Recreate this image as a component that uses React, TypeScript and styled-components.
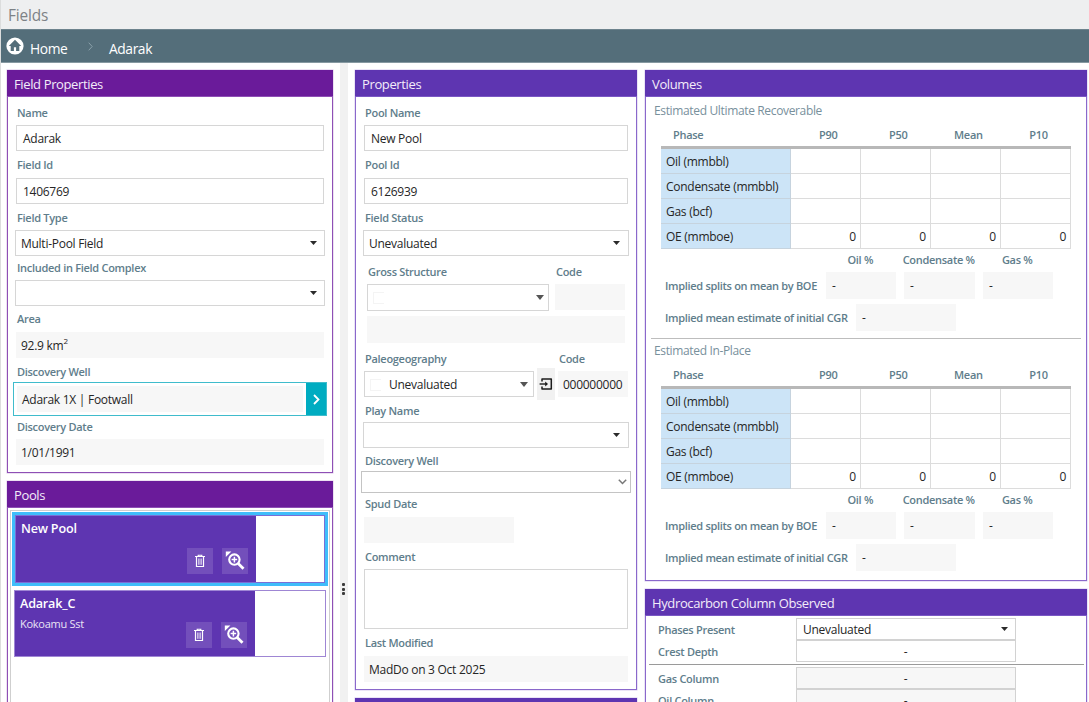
import React from "react";
import styled, { createGlobalStyle, css } from "styled-components";

const GlobalStyle = createGlobalStyle`
  * { box-sizing: border-box; }
  html, body { margin: 0; padding: 0; background: #fff; }
  body {
    font-family: "Open Sans", "Noto Sans", sans-serif;
    font-size: 12px;
    letter-spacing: -0.27px;
    color: #262626;
    overflow: hidden;
  }
`;

const Page = styled.div`
  width: 1089px;
  height: 702px;
  overflow: hidden;
  display: flex;
  flex-direction: column;
  background: #fff;
  border-left: 1px solid #dcdddd;
`;

const TitleBar = styled.header`
  flex: none;
  height: 29px;
  padding-left: 7px;
  background: #eeeff0;
  color: #7d8286;
  font-size: 15.4px;
  letter-spacing: -0.15px;
  line-height: 31px;
`;

const Breadcrumb = styled.nav`
  flex: none;
  height: 34px;
  margin-left: -1px;
  padding-left: 6px;
  display: flex;
  align-items: center;
  background: #546e7a;
  border-top: 1px solid #6d838d;
  border-bottom: 1px solid #8699a1;
  color: #fff;
  font-size: 13.8px;
  letter-spacing: -0.4px;
  svg { display: block; }
`;

const HomeBadge = styled.span`
  width: 18px;
  height: 18px;
`;

const Crumb = styled.span<{ $left: number; $w?: number }>`
  margin-left: ${(p) => p.$left}px;
  width: ${(p) => (p.$w ? p.$w + "px" : "auto")};
  padding-top: 5px;
  line-height: 18px;
  white-space: nowrap;
`;

const Workspace = styled.main`
  flex: 1;
  min-height: 0;
  display: flex;
  align-items: stretch;
`;

const Column = styled.section<{ $w: number; $left: number; $gap: number }>`
  flex: none;
  width: ${(p) => p.$w}px;
  margin-left: ${(p) => p.$left}px;
  padding-top: 7px;
  display: flex;
  flex-direction: column;
  gap: ${(p) => p.$gap}px;
`;

const Splitter = styled.div`
  flex: none;
  width: 8px;
  margin-left: 7px;
  background: #f1f1f1;
  display: flex;
  flex-direction: column;
  align-items: flex-start;
  padding: 520px 0 0 2px;
  gap: 1.5px;
`;

const Dot = styled.i`
  width: 3px;
  height: 3px;
  border-radius: 1px;
  background: #3b3b3b;
`;

const PanelFrame = styled.article<{ $tone: "violet" | "indigo"; $h: number }>`
  flex: none;
  height: ${(p) => p.$h}px;
  border: 1px solid ${(p) => (p.$tone === "violet" ? "#8e4fb5" : "#8a68cb")};
  box-shadow: 0 0 0 0.5px ${(p) => (p.$tone === "violet" ? "#d9c3e6" : "#d6caee")};
  display: flex;
  flex-direction: column;
  background: #fff;
`;

const PanelHead = styled.h2<{ $tone: "violet" | "indigo" }>`
  flex: none;
  margin: -1px -1px 0;
  height: 27px;
  padding-left: 7px;
  background: ${(p) => (p.$tone === "violet" ? "#6a1b9a" : "#5e35b1")};
  border-bottom: 1px solid ${(p) => (p.$tone === "violet" ? "#8e4fb5" : "#7a58c4")};
  color: #f3ecf9;
  font-weight: 400;
  font-size: 13px;
  letter-spacing: -0.37px;
  line-height: 28px;
`;

const Label = styled.label<{ $h: number; $pb?: number; $pl?: number; $w?: number }>`
  flex: none;
  display: flex;
  align-items: flex-end;
  height: ${(p) => p.$h}px;
  width: ${(p) => (p.$w ? p.$w + "px" : "auto")};
  padding-left: ${(p) => p.$pl ?? 9}px;
  padding-bottom: ${(p) => p.$pb ?? 4}px;
  line-height: 16px;
  font-size: 11px;
  letter-spacing: -0.29px;
  font-weight: 600;
  color: #607d8b;
  white-space: nowrap;
`;

const Box = styled.div<{
  $kind?: "input" | "read";
  $h?: number;
  $w?: number;
  $ml?: number;
  $mr?: number;
  $pl?: number;
  $pr?: number;
  $edge?: string;
}>`
  flex: none;
  display: flex;
  align-items: center;
  height: ${(p) => p.$h ?? 26}px;
  ${(p) => p.$w && css`width: ${p.$w}px;`}
  margin-left: ${(p) => p.$ml ?? 8}px;
  margin-right: ${(p) => p.$mr ?? 8}px;
  padding: 1px ${(p) => p.$pr ?? 7}px 0 ${(p) => p.$pl ?? 6}px;
  line-height: 16px;
  white-space: nowrap;
  ${(p) =>
    p.$kind === "read"
      ? css`background: #f7f7f7;`
      : css`background: #fff; border: 1px solid ${p.$edge ?? "#d6d6d6"};`}
  svg { margin: 0 0 1px auto; flex: none; display: block; }
  sup { font-size: 8px; line-height: 8px; align-self: flex-start; margin-top: 4px; }
`;

const StripBox = styled(Box)`
  margin-top: 5px;
`;

const BoxText = styled.span`
  margin-left: 8px;
`;

const Row = styled.div`
  flex: none;
  display: flex;
  align-items: flex-start;
`;

const WellPicker = styled.div`
  flex: none;
  display: flex;
  height: 34px;
  margin: 0 5px;
  border: 1px solid #3fbccc;
`;

const WellName = styled.div`
  flex: 1;
  margin: 3px;
  padding-left: 5px;
  background: #f7f7f7;
  line-height: 27px;
`;

const WellGo = styled.button`
  width: 20px;
  padding: 0;
  border: 0;
  background: #00acc1;
  display: grid;
  place-items: center;
`;

const Ghost = styled.span`
  width: 11px;
  height: 12px;
  border: 1px solid #f4f4f4;
  border-right: 0;
`;

const JumpButton = styled.button`
  width: 18px;
  height: 32px;
  margin: -3px 3px 0;
  padding: 0;
  border: 0;
  background: #f1f1f1;
  display: grid;
  place-items: center;
`;

const PoolList = styled.div`
  flex: 1;
  margin: 2px 2px 0;
  padding: 1px 1px 0;
  border: 1px solid #cfcfcf;
  display: flex;
  flex-direction: column;
  gap: 4px;
`;

const PoolItem = styled.div<{ $selected?: boolean }>`
  display: flex;
  background: #fff;
  ${(p) =>
    p.$selected
      ? css`
          height: 74px;
          border: 3px solid #3fbdfa;
          box-shadow: inset 0 0 0 1px #7a6fd6;
        `
      : css`
          height: 67px;
          margin: 0 2px;
          border: 1px solid #9f86d4;
        `}
`;

const PoolBody = styled.div<{ $selected?: boolean }>`
  width: 240px;
  margin: ${(p) => (p.$selected ? "1px 0 1px 1px" : "0")};
  background: #5e35b1;
  color: #fff;
  padding: 4px 8px 8px 5px;
  display: grid;
  grid-template-columns: 1fr auto;
  grid-template-rows: 18px 1fr;
`;

const PoolName = styled.strong`
  grid-column: 1 / 3;
  font-size: 12.6px;
  letter-spacing: -0.2px;
  font-weight: 600;
  line-height: 18px;
`;

const PoolNote = styled.span`
  font-size: 11px;
  line-height: 20px;
  padding-top: 1px;
  color: #eae4f5;
`;

const PoolActions = styled.span`
  display: flex;
  align-items: flex-end;
  gap: 9px;
`;

const PoolButton = styled.button`
  width: 26px;
  height: 26px;
  padding: 0;
  border: 0;
  background: #734fbb;
  display: grid;
  place-items: center;
  svg { display: block; }
`;

const Estimate = styled.section<{ $h: number; $top: number; $rule?: boolean }>`
  flex: none;
  height: ${(p) => p.$h}px;
  margin: 0 5px;
  padding: ${(p) => p.$top}px 0 0 10px;
  ${(p) => p.$rule && css`border-bottom: 1px solid #bdbdbd;`}
`;

const EstimateTitle = styled.h3`
  margin: 0 0 0 -7px;
  height: 26px;
  font-size: 12px;
  letter-spacing: -0.35px;
  font-weight: 400;
  line-height: 16px;
  color: #78909c;
`;

const Grid = styled.table`
  width: 410px;
  border-collapse: collapse;
  table-layout: fixed;
  th {
    height: 18px;
    padding: 0 0 4px 6px;
    border-bottom: 3px solid #b8b8b8;
    font-size: 11px;
    letter-spacing: -0.29px;
    font-weight: 600;
    line-height: 12px;
    color: #607d8b;
    text-align: center;
  }
  th:first-child { text-align: left; padding-left: 12px; }
  td {
    height: 25px;
    padding: 2px 4px 0;
    border: 1px solid #dcdcdc;
    text-align: right;
    line-height: 16px;
  }
  tbody tr:first-child td { height: 26px; }
  td:first-child {
    background: #cce4f7;
    border-left: 0;
    border-color: #c6d3de;
    padding-left: 5px;
    text-align: left;
  }
`;

const SplitHeads = styled.div`
  display: grid;
  grid-template-columns: repeat(3, 78.5px);
  height: 23px;
  margin-left: 160px;
  justify-items: center;
  line-height: 21px;
  font-size: 11px;
  letter-spacing: -0.29px;
  font-weight: 600;
  color: #607d8b;
`;

const SplitRow = styled.div<{ $gap: number }>`
  display: flex;
  height: 27px;
  margin-bottom: 5px;
  padding-left: 4px;
  gap: ${(p) => p.$gap}px;
`;

const SplitLabel = styled.span<{ $w: number }>`
  width: ${(p) => p.$w}px;
  line-height: 28px;
  font-size: 11px;
  letter-spacing: -0.31px;
  font-weight: 600;
  color: #607d8b;
  white-space: nowrap;
`;

const SplitValue = styled.span<{ $w: number }>`
  width: ${(p) => p.$w}px;
  padding-left: 6px;
  background: #f7f7f7;
  line-height: 27px;
`;

const ColumnRow = styled.div<{ $top?: number }>`
  flex: none;
  display: flex;
  align-items: center;
  height: 22px;
  margin-top: ${(p) => p.$top ?? 0}px;
  padding-left: 12px;
`;

const ColumnLabel = styled.span`
  width: 138px;
  padding-top: 1px;
  font-size: 11px;
  line-height: 16px;
  letter-spacing: -0.29px;
  font-weight: 600;
  color: #607d8b;
`;

const ColumnValue = styled.span<{ $read?: boolean; $left?: boolean }>`
  display: flex;
  align-items: center;
  justify-content: ${(p) => (p.$left ? "space-between" : "center")};
  width: 220px;
  height: 22px;
  padding: 0 7px 0 6px;
  border: 1px solid #d2d2d2;
  background: ${(p) => (p.$read ? "#f7f7f7" : "#fff")};
`;

const Rule = styled.hr`
  flex: none;
  width: calc(100% - 5px);
  height: 1px;
  margin: 2px 0 0 3px;
  border: 0;
  background: #9a9a9a;
`;

const Caret = ({ color = "#2b2b2b", w = 7 }: { color?: string; w?: number }) => (
  <svg width={w} height={w === 7 ? 4 : 5} viewBox="0 0 8 5" preserveAspectRatio="none">
    <path d="M0 0h8L4 5z" fill={color} />
  </svg>
);

const HomeIcon = () => (
  <svg width="18" height="18" viewBox="0 0 18 18">
    <circle cx="9" cy="9" r="8.6" fill="#fff" />
    <path d="M9 2.8 2.8 8.900h1.900v5.200h3.200v-3.900h2.200v3.900h3.200V8.900h1.900z" fill="#546e7a" />
  </svg>
);

const TrashIcon = () => (
  <svg width="12" height="14" viewBox="0 0 12 14" fill="none" stroke="#fff">
    <path d="M1 2.500h10M4.200 2V1.300h3.600V2" strokeWidth="1.1" />
    <path d="M2.500 3v9.500h7V3" strokeWidth="1.200" />
    <path d="M4.900 4.500v6.300M7.100 4.500v6.300" strokeWidth="1" />
  </svg>
);

const ZoomIcon = () => (
  <svg width="20" height="20" viewBox="0 0 20 20" fill="none" stroke="#fff">
    <path d="M.8.4h5.600L.8 6z" fill="#fff" stroke="none" />
    <circle cx="9.400" cy="8.600" r="5.200" strokeWidth="2.100" />
    <path d="M6.600 8.600h5.600M9.400 5.800v5.600" strokeWidth="1.500" />
    <path d="m13.200 12.500 5.300 5.300" strokeWidth="2.800" />
  </svg>
);

const JumpIcon = () => (
  <svg width="14" height="12" viewBox="0 0 14 12" fill="none" stroke="#1c1c1c">
    <path d="M3 3.4V1h9.3v10H3V8.600" strokeWidth="1.5" strokeLinejoin="round" />
    <path d="M.6 6h7" strokeWidth="1.4" />
    <path d="M6.200 3.400 9 6 6.200 8.600z" fill="#1c1c1c" stroke="none" />
  </svg>
);

const phases = ["Oil (mmbbl)", "Condensate (mmbbl)", "Gas (bcf)", "OE (mmboe)"];

function EstimateBlock({ title, h, top, rule }: { title: string; h: number; top: number; rule?: boolean }) {
  return (
    <Estimate $h={h} $top={top} $rule={rule}>
      <EstimateTitle>{title}</EstimateTitle>
      <Grid>
        <colgroup>
          <col style={{ width: 129 }} />
          <col style={{ width: 70 }} />
          <col style={{ width: 70 }} />
          <col style={{ width: 70 }} />
          <col style={{ width: 70 }} />
        </colgroup>
        <thead>
          <tr>
            <th>Phase</th>
            <th>P90</th>
            <th>P50</th>
            <th>Mean</th>
            <th>P10</th>
          </tr>
        </thead>
        <tbody>
          {phases.map((name, i) => (
            <tr key={name}>
              <td>{name}</td>
              {[0, 1, 2, 3].map((c) => (
                <td key={c}>{i === 3 ? "0" : ""}</td>
              ))}
            </tr>
          ))}
        </tbody>
      </Grid>
      <SplitHeads>
        <span>Oil %</span>
        <span>Condensate %</span>
        <span>Gas %</span>
      </SplitHeads>
      <SplitRow $gap={8}>
        <SplitLabel $w={153}>Implied splits on mean by BOE</SplitLabel>
        <SplitValue $w={70}>-</SplitValue>
        <SplitValue $w={71}>-</SplitValue>
        <SplitValue $w={70}>-</SplitValue>
      </SplitRow>
      <SplitRow $gap={8}>
        <SplitLabel $w={183}>Implied mean estimate of initial CGR</SplitLabel>
        <SplitValue $w={100}>-</SplitValue>
      </SplitRow>
    </Estimate>
  );
}

function Pool({ name, note, selected }: { name: string; note?: string; selected?: boolean }) {
  return (
    <PoolItem $selected={selected}>
      <PoolBody $selected={selected}>
        <PoolName>{name}</PoolName>
        <PoolNote>{note}</PoolNote>
        <PoolActions>
          <PoolButton aria-label="Delete">
            <TrashIcon />
          </PoolButton>
          <PoolButton aria-label="Zoom to">
            <ZoomIcon />
          </PoolButton>
        </PoolActions>
      </PoolBody>
    </PoolItem>
  );
}

export default function App() {
  return (
    <>
      <GlobalStyle />
      <Page>
        <TitleBar>Fields</TitleBar>
        <Breadcrumb>
          <HomeBadge>
            <HomeIcon />
          </HomeBadge>
          <Crumb $left={6} $w={58}>Home</Crumb>
          <svg width="5" height="9" viewBox="0 0 5 9" fill="none" stroke="#8ba0aa">
            <path d="M.7.7 4.200 4.500.7 8.300" />
          </svg>
          <Crumb $left={16}>Adarak</Crumb>
        </Breadcrumb>
        <Workspace>
          <Column $w={326} $left={6} $gap={8}>
            <PanelFrame $tone="violet" $h={403}>
              <PanelHead $tone="violet">Field Properties</PanelHead>
              <Label $h={28}>Name</Label>
              <Box $w={308}>Adarak</Box>
              <Label $h={27} $pb={5}>Field Id</Label>
              <Box $w={308}>1406769</Box>
              <Label $h={26}>Field Type</Label>
              <Box $w={310} $ml={7} $pl={5}>Multi-Pool Field<Caret /></Box>
              <Label $h={24}>Included in Field Complex</Label>
              <Box $w={310} $ml={7}><Caret /></Box>
              <Label $h={26} $pb={5}>Area</Label>
              <Box $kind="read" $w={308} $pl={5}>92.9 km<sup>2</sup></Box>
              <Label $h={24} $pb={2}>Discovery Well</Label>
              <WellPicker>
                <WellName>Adarak 1X | Footwall</WellName>
                <WellGo aria-label="Open well">
                  <svg width="7" height="11" viewBox="0 0 7 11" fill="none" stroke="#fff" strokeWidth="1.8">
                    <path d="m1 1 4.500 4.500L1 10" />
                  </svg>
                </WellGo>
              </WellPicker>
              <Label $h={23}>Discovery Date</Label>
              <Box $kind="read" $w={308} $pl={5}>1/01/1991</Box>
            </PanelFrame>
            <PanelFrame $tone="violet" $h={240}>
              <PanelHead $tone="violet">Pools</PanelHead>
              <PoolList>
                <Pool name="New Pool" selected />
                <Pool name="Adarak_C" note="Kokoamu Sst" />
              </PoolList>
            </PanelFrame>
          </Column>
          <Splitter>
            <Dot />
            <Dot />
            <Dot />
          </Splitter>
          <Column $w={282} $left={7} $gap={8}>
            <PanelFrame $tone="indigo" $h={620}>
              <PanelHead $tone="indigo">Properties</PanelHead>
              <Label $h={28}>Pool Name</Label>
              <Box>New Pool</Box>
              <Label $h={27} $pb={5}>Pool Id</Label>
              <Box>6126939</Box>
              <Label $h={26}>Field Status</Label>
              <Box $ml={7} $mr={7} $pl={5} $pr={8}>Unevaluated<Caret /></Box>
              <Row>
                <Label $h={28} $pl={12} $w={200}>Gross Structure</Label>
                <Label $h={28} $pl={0}>Code</Label>
              </Row>
              <Row>
                <Box $w={182} $ml={11} $mr={6} $h={27} $pl={5} $pr={4}>
                  <Ghost />
                  <Caret color="#555" w={8} />
                </Box>
                <Box $kind="read" $w={70} $ml={0} $mr={0} />
              </Row>
              <Row>
                <StripBox $kind="read" $w={258} $ml={11} $h={27} />
              </Row>
              <Row>
                <Label $h={28} $w={203}>Paleogeography</Label>
                <Label $h={28} $pl={0}>Code</Label>
              </Row>
              <Row>
                <Box $w={170} $mr={0} $pl={5} $pr={5}>
                  <Ghost />
                  <BoxText>Unevaluated</BoxText>
                  <Caret color="#555" w={8} />
                </Box>
                <JumpButton aria-label="Pick paleogeography">
                  <JumpIcon />
                </JumpButton>
                <Box $kind="read" $w={70} $ml={0} $mr={0} $pl={5}>000000000</Box>
              </Row>
              <Label $h={22} $pb={3}>Play Name</Label>
              <Box $ml={7} $mr={7} $pr={8}><Caret /></Box>
              <Label $h={23} $pb={2}>Discovery Well</Label>
              <Box $ml={5} $mr={5} $h={22} $pr={3} $edge="#c4c4c4">
                <svg width="9" height="6" viewBox="0 0 9 6" fill="none" stroke="#777" strokeWidth="1.5">
                  <path d="m.8.8 3.700 3.700L8.200.8" />
                </svg>
              </Box>
              <Label $h={24} $pb={5}>Spud Date</Label>
              <Box $kind="read" $w={150} />
              <Label $h={26} $pb={4}>Comment</Label>
              <Box $h={60} />
              <Label $h={27} $pb={5}>Last Modified</Label>
              <Box $kind="read" $pl={5}>MadDo on 3 Oct 2025</Box>
            </PanelFrame>
            <PanelFrame $tone="indigo" $h={100}>
              <PanelHead $tone="indigo" />
            </PanelFrame>
          </Column>
          <Column $w={442} $left={8} $gap={8}>
            <PanelFrame $tone="indigo" $h={511}>
              <PanelHead $tone="indigo">Volumes</PanelHead>
              <EstimateBlock title="Estimated Ultimate Recoverable" h={242} top={6} rule />
              <EstimateBlock title="Estimated In-Place" h={240} top={4} />
            </PanelFrame>
            <PanelFrame $tone="indigo" $h={200}>
              <PanelHead $tone="indigo">Hydrocarbon Column Observed</PanelHead>
              <ColumnRow $top={2}>
                <ColumnLabel>Phases Present</ColumnLabel>
                <ColumnValue $left>
                  Unevaluated
                  <Caret />
                </ColumnValue>
              </ColumnRow>
              <ColumnRow>
                <ColumnLabel>Crest Depth</ColumnLabel>
                <ColumnValue>-</ColumnValue>
              </ColumnRow>
              <Rule />
              <ColumnRow $top={2}>
                <ColumnLabel>Gas Column</ColumnLabel>
                <ColumnValue $read>-</ColumnValue>
              </ColumnRow>
              <ColumnRow>
                <ColumnLabel>Oil Column</ColumnLabel>
                <ColumnValue $read>-</ColumnValue>
              </ColumnRow>
            </PanelFrame>
          </Column>
        </Workspace>
      </Page>
    </>
  );
}
